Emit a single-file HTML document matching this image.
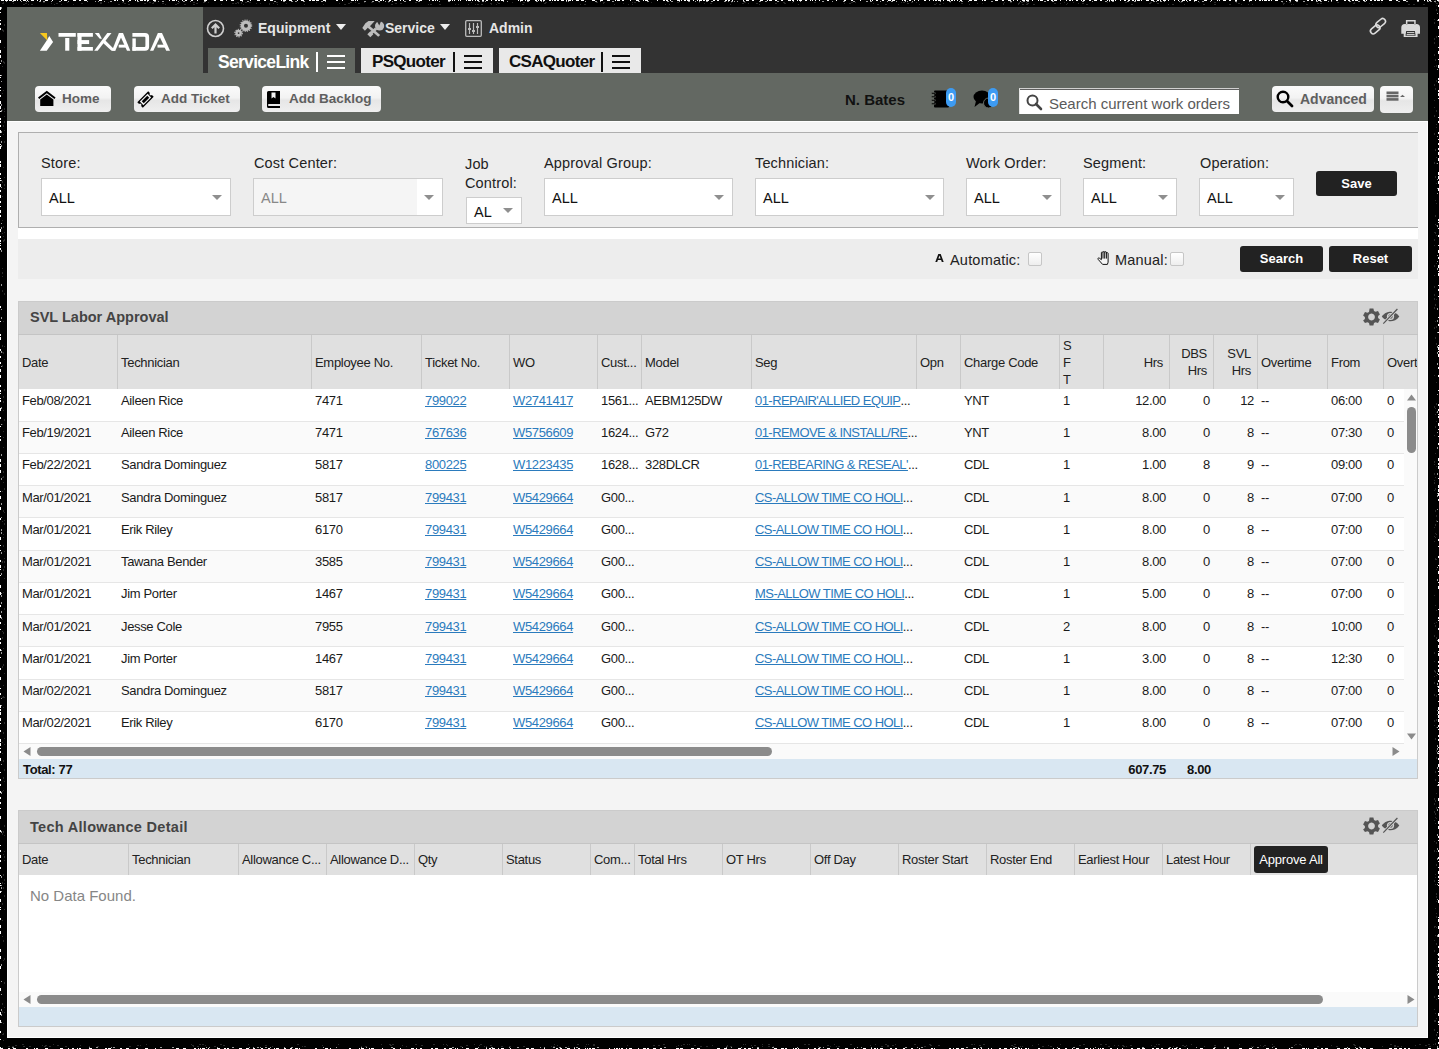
<!DOCTYPE html>
<html><head><meta charset="utf-8"><style>
*{box-sizing:border-box;margin:0;padding:0}
html,body{width:1439px;height:1049px;overflow:hidden;background:#000;font-family:"Liberation Sans",sans-serif;}
.a{position:absolute}
#app{position:absolute;left:7px;top:7px;width:1421px;height:1031px;background:#f4f4f4;overflow:hidden}
.t{position:absolute;white-space:nowrap;line-height:1}
.nav{color:#e6e6e6;font-weight:bold;font-size:14px}
.tab{position:absolute;top:48px;height:25px;background:#e9e9e9}
.tab .lbl{position:absolute;top:4px;font-weight:bold;font-size:17.5px;color:#111;letter-spacing:-0.7px}
.tab .sep{position:absolute;top:4px;width:2px;height:20px;background:#111}
.tab .ham{position:absolute;top:7px;width:18px;height:14px;border-top:2px solid #111;border-bottom:2px solid #111}
.tab .ham:after{content:"";position:absolute;left:0;right:0;top:4px;height:2px;background:#111}
.tab.act{background:#636862}
.tab.act .lbl{color:#fff}
.tab.act .sep,.tab.act .ham:after{background:#fff}
.tab.act .ham{border-color:#fff}
.btn{position:absolute;top:86px;height:26px;border-radius:4px;background:linear-gradient(#fafafa 0%,#f3f3f3 45%,#e6e6e6 55%,#efefef 100%);}
.btn .bt{position:absolute;top:5px;font-weight:bold;font-size:13.5px;color:#5f5f5f}

.lab{position:absolute;font-size:14.5px;color:#222;white-space:nowrap;line-height:19px;letter-spacing:0.15px}
.sel{position:absolute;top:178px;height:38px;background:#fff;border:1px solid #cdcdcd}
.sel .v{position:absolute;left:7px;top:12px;font-size:14.5px;color:#111;line-height:1}
.sel .ar{position:absolute;right:8px;top:16px;width:0;height:0;border-left:5px solid transparent;border-right:5px solid transparent;border-top:5px solid #8f8f8f}
.dbtn{position:absolute;background:#222;border-radius:3px;color:#fff;font-weight:bold;font-size:13px;text-align:center}
.cb{position:absolute;width:14px;height:14px;border:1px solid #c6c6c6;border-radius:2px;background:linear-gradient(#fff,#eee)}

.ph{position:absolute;background:#d3d3d3}
.ph .tt{position:absolute;left:12px;font-weight:bold;font-size:14.5px;color:#444;line-height:1}
.hc{position:absolute;font-size:13px;color:#222;line-height:17px;white-space:nowrap;letter-spacing:-0.3px}
.vb{position:absolute;width:1px;background:#c9c9c9}
.dc{position:absolute;font-size:13px;color:#1a1a1a;line-height:1;white-space:nowrap;letter-spacing:-0.35px}
.dc a{color:#2b7bbd;text-decoration:underline}
.rs{position:absolute;height:1px;background:#e6e6e6}
</style></head>
<body>
<div id="app"></div>
<div class="a" style="left:7px;top:121px;width:1421px;height:917px;background:#f4f4f4;border:1px solid #fff"></div>

<div class="a" style="left:7px;top:7px;width:196px;height:66px;background:#636862"></div>
<div class="a" style="left:203px;top:7px;width:1225px;height:66px;background:#333"></div>
<div class="a" style="left:7px;top:73px;width:1421px;height:48px;background:#636862"></div>
<!-- logo -->
<svg class="a" style="left:39px;top:32px" width="134" height="20" viewBox="0 0 134 20"><g fill="#fff">
<polygon points="10.3,4.1 14.06,9.9 7.7,18.8 0.86,18.8 7.4,9.06"/>
<rect x="19.5" y="1" width="17.3" height="3.75"/><rect x="26.2" y="6" width="4.1" height="12.7"/>
<rect x="38.5" y="1" width="4.1" height="17.7"/><rect x="38.5" y="1" width="15.4" height="3.75"/><rect x="38.5" y="8.1" width="11.65" height="3.95"/><rect x="38.5" y="15" width="15.4" height="3.7"/>
<polygon points="55.2,18.7 58.7,18.7 72.5,1 68.3,1"/><polygon points="55.8,1 60,1 62.9,6.8 60.8,6.8"/><polygon points="63.6,10.4 65.9,7.9 76.6,18.7 72.5,18.7"/>
<polygon points="73,18.7 76.3,18.7 84,1 79.9,1"/><polygon points="79.9,1 84,1 91.3,18.7 88,18.7"/><rect x="79.7" y="12.7" width="9.1" height="2.9"/>
<path d="M93.4,1 H106 Q110.1,1 110.1,5 V14.7 Q110.1,18.7 106,18.7 H93.4 V15 H105.5 Q106.4,15 106.4,14 V5.7 Q106.4,4.75 105.5,4.75 H93.4 Z"/><rect x="93.4" y="6.4" width="3.4" height="12.3"/>
<polygon points="111,18.7 114.3,18.7 123,1 118.9,1"/><polygon points="118.9,1 123,1 131,18.7 127.2,18.7"/><rect x="118.5" y="12.7" width="9.1" height="2.9"/>
</g><polygon points="0.86,1 7.95,1 8.3,8.4" fill="#f8c81d"/></svg>
<!-- nav -->
<svg class="a" style="left:206px;top:19px" width="19" height="19" viewBox="0 0 19 19"><circle cx="9.5" cy="9.5" r="8" fill="none" stroke="#cfcfcf" stroke-width="1.6"/><path d="M9.5 14.5V6M5.8 9.3L9.5 5.5 13.2 9.3" fill="none" stroke="#cfcfcf" stroke-width="2.2"/></svg>
<svg class="a" style="left:234px;top:19px" width="19" height="19" viewBox="0 0 19 19"><g fill="#bdbdbd"><circle cx="11.95" cy="6.7" r="5.2"/><circle cx="4.6" cy="14.1" r="3.3"/></g><g fill="none" stroke="#bdbdbd"><circle cx="11.95" cy="6.7" r="5.6" stroke-width="1.3" stroke-dasharray="1.1 1.1"/><circle cx="4.6" cy="14.1" r="3.7" stroke-width="1.2" stroke-dasharray="1.15 1.15"/></g><circle cx="11.95" cy="6.7" r="2" fill="#333"/><circle cx="4.6" cy="14.1" r="0.9" fill="#333"/></svg>
<div class="t nav" style="left:258px;top:21px">Equipment</div>
<svg class="a" style="left:336px;top:24px" width="10" height="7"><polygon points="0,0 10,0 5,6" fill="#eee"/></svg>
<svg class="a" style="left:362px;top:19px" width="23" height="19" viewBox="0 0 23 19"><g fill="#bdbdbd"><path d="M0.3 8.9 L3.4 4.3 L6.5 2 L12.7 2 L8.4 6.7 L6 8.6 L2.9 11.7z"/><path d="M5.5 8.5 L7.5 6.8 L18.2 16 L16.2 17.8z"/><circle cx="17.6" cy="7" r="4.6"/><path d="M13 8.5 L15.2 10.6 L9.8 15.6 L7.7 13.5z"/><path d="M8.3 12.2 L11.3 15.2 L8.3 18.2 L5.3 15.2z"/></g><path d="M14.2 1 L19.5 1 L17.3 6.5z" fill="#333"/></svg>
<div class="t nav" style="left:385px;top:21px">Service</div>
<svg class="a" style="left:440px;top:24px" width="10" height="7"><polygon points="0,0 10,0 5,6" fill="#eee"/></svg>
<svg class="a" style="left:465px;top:20px" width="17" height="17" viewBox="0 0 17 17"><rect x="0.7" y="0.7" width="15.6" height="15.6" rx="1" fill="none" stroke="#bbb" stroke-width="1.3"/><g stroke="#bbb" stroke-width="1.2"><path d="M4.5 3v11M8.5 3v11M12.5 3v11"/></g><g fill="#bbb"><rect x="3" y="8" width="3" height="2"/><rect x="7" y="10" width="3" height="2"/><rect x="11" y="6" width="3" height="2"/></g></svg>
<div class="t nav" style="left:489px;top:21px">Admin</div>
<!-- right header icons -->
<svg class="a" style="left:1368px;top:17px" width="20" height="20" viewBox="0 0 20 20"><g fill="none" stroke="#dcdcdc" stroke-width="1.6"><rect x="7.4" y="3.2" width="10.6" height="5.6" rx="2.8" transform="rotate(-40 12.7 6)"/><rect x="1.9" y="9.6" width="10.6" height="5.6" rx="2.8" transform="rotate(-40 7.2 12.4)"/></g></svg>
<svg class="a" style="left:1401px;top:20px" width="20" height="18" viewBox="0 0 20 18"><path fill-rule="evenodd" fill="#d9d9d9" d="M4.9 0H14.7V4.2H13.2V1.4H6.4V4.2H4.9Z M3.8 3.9H15.4Q19 3.9 19 7.5V13.7H16.6V17H2.7V13.7H0.3V7.5Q0.3 3.9 3.8 3.9Z M5.2 11H13.9L14.6 15.8H4.5Z"/><rect x="6" y="12.1" width="7.3" height="1" fill="#d9d9d9"/><rect x="5.6" y="14.1" width="8" height="1" fill="#d9d9d9"/></svg>
<!-- tabs -->
<div class="tab act" style="left:208px;width:147px"><div class="lbl" style="left:10px">ServiceLink</div><div class="sep" style="left:108px"></div><div class="ham" style="left:119px"></div></div>
<div class="tab" style="left:361px;width:132px"><div class="lbl" style="left:11px;font-size:17px">PSQuoter</div><div class="sep" style="left:92px"></div><div class="ham" style="left:103px"></div></div>
<div class="tab" style="left:499px;width:142px"><div class="lbl" style="left:10px;font-size:17px">CSAQuoter</div><div class="sep" style="left:102px"></div><div class="ham" style="left:113px"></div></div>
<!-- toolbar buttons -->
<div class="btn" style="left:35px;width:76px"><svg class="a" style="left:3px;top:4px" width="18" height="17" viewBox="0 0 18 17"><path d="M8.8 0.8 L17.6 7.6 L16.4 9 L8.8 3.2 L1.2 9 L0 7.6 Z" fill="#000"/><path d="M2.2 9.5 L8.8 4.6 L15.4 9.5 V16 H2.2 Z" fill="#000"/></svg><div class="bt" style="left:27px">Home</div></div>
<div class="btn" style="left:134px;width:106px"><svg class="a" style="left:3px;top:5px" width="17" height="17" viewBox="0 0 17 17"><g transform="rotate(-45 8.5 8.5)"><path d="M0.8 4.6H16.2V7.1A1.4 1.4 0 0 0 16.2 9.9V12.4H0.8V9.9A1.4 1.4 0 0 0 0.8 7.1z" fill="#000"/><rect x="3" y="6" width="11" height="5" fill="#f2f2f2"/><rect x="4.6" y="7.1" width="7.8" height="2.8" fill="#000"/></g></svg><div class="bt" style="left:27px">Add Ticket</div></div>
<div class="btn" style="left:262px;width:119px"><svg class="a" style="left:5px;top:5px" width="14" height="17" viewBox="0 0 14 17"><path d="M0 1.5A1.5 1.5 0 0 1 1.5 0H13v13H2a1 1 0 0 0 0 2h11v2H1.5A1.5 1.5 0 0 1 0 15.5z" fill="#000"/><path d="M4.5 1.5h4v6l-2-1.6-2 1.6z" fill="#f3f3f3"/></svg><div class="bt" style="left:27px">Add Backlog</div></div>
<div class="t" style="left:845px;top:92px;font-weight:bold;font-size:15px;color:#111">N. Bates</div>
<svg class="a" style="left:931px;top:90px" width="19" height="18" viewBox="0 0 19 18"><rect x="3" y="0.5" width="15" height="17" rx="1" fill="#000"/><g fill="#000" stroke="#636862" stroke-width="0.6"><rect x="0.5" y="2.5" width="4" height="1.6" rx="0.8"/><rect x="0.5" y="6" width="4" height="1.6" rx="0.8"/><rect x="0.5" y="9.5" width="4" height="1.6" rx="0.8"/><rect x="0.5" y="13" width="4" height="1.6" rx="0.8"/></g></svg>
<div class="a" style="left:946px;top:88px;width:10px;height:19px;border-radius:5px;background:#3d9bf2;color:#fff;font-size:11px;font-weight:bold;text-align:center;line-height:19px">0</div>
<svg class="a" style="left:973px;top:90px" width="22" height="19" viewBox="0 0 22 19"><ellipse cx="9" cy="7" rx="8.5" ry="6.5" fill="#000"/><path d="M3 11 L1.5 17 L8 12z" fill="#000"/><circle cx="15.5" cy="13" r="5" fill="#000" stroke="#636862" stroke-width="1"/></svg>
<div class="a" style="left:988px;top:88px;width:10px;height:19px;border-radius:5px;background:#3d9bf2;color:#fff;font-size:11px;font-weight:bold;text-align:center;line-height:19px">0</div>
<div class="a" style="left:1019px;top:88px;width:220px;height:26px;background:#fff;border-top:1px solid #d0d0d0;border-left:1px solid #e6e6e6;box-shadow:inset 0 1px 0 #606060"></div>
<svg class="a" style="left:1026px;top:94px" width="17" height="17" viewBox="0 0 17 17"><circle cx="6.5" cy="6.5" r="5" fill="none" stroke="#444" stroke-width="2"/><path d="M10 10 L15 15" stroke="#444" stroke-width="2.6" stroke-linecap="round"/></svg>
<div class="t" style="left:1049px;top:96px;font-size:15px;color:#5a5a5a">Search current work orders</div>
<div class="btn" style="left:1272px;width:102px"><svg class="a" style="left:4px;top:4px" width="18" height="18" viewBox="0 0 18 18"><circle cx="7" cy="7" r="5.3" fill="none" stroke="#000" stroke-width="2.4"/><path d="M11 11 L16 16" stroke="#000" stroke-width="2.8" stroke-linecap="round"/></svg><div class="bt" style="left:28px;font-size:14px">Advanced</div></div>
<div class="btn" style="left:1380px;width:33px;height:27px"><svg class="a" style="left:6px;top:5px" width="20" height="11" viewBox="0 0 20 11"><rect x="0.5" y="0.5" width="12" height="2.6" fill="#666"/><rect x="0.5" y="3.8" width="12" height="2.6" fill="#666"/><rect x="0.5" y="7.1" width="12" height="2.6" fill="#666"/><polygon points="14,6 19,6 16.5,3.8" fill="#666"/></svg></div>


<div class="a" style="left:18px;top:132px;width:1400px;height:96px;background:#ededed;border:1px solid #afafaf;border-right:none"></div>
<div class="lab" style="left:41px;top:154px">Store:</div>
<div class="sel" style="left:41px;width:190px"><div class="v">ALL</div><div class="ar"></div></div>
<div class="lab" style="left:254px;top:154px">Cost Center:</div>
<div class="sel" style="left:253px;width:190px;background:#f5f5f5"><div class="a" style="right:0;top:0;width:25px;height:36px;background:#fff"></div><div class="v" style="color:#888">ALL</div><div class="ar"></div></div>
<div class="lab" style="left:465px;top:155px">Job<br>Control:</div>
<div class="sel" style="left:466px;top:197px;width:56px;height:27px"><div class="v" style="top:7px">AL</div><div class="ar" style="top:10px;right:8px"></div></div>
<div class="lab" style="left:544px;top:154px">Approval Group:</div>
<div class="sel" style="left:544px;width:189px"><div class="v">ALL</div><div class="ar"></div></div>
<div class="lab" style="left:755px;top:154px">Technician:</div>
<div class="sel" style="left:755px;width:189px"><div class="v">ALL</div><div class="ar"></div></div>
<div class="lab" style="left:966px;top:154px">Work Order:</div>
<div class="sel" style="left:966px;width:95px"><div class="v">ALL</div><div class="ar"></div></div>
<div class="lab" style="left:1083px;top:154px">Segment:</div>
<div class="sel" style="left:1083px;width:94px"><div class="v">ALL</div><div class="ar"></div></div>
<div class="lab" style="left:1200px;top:154px">Operation:</div>
<div class="sel" style="left:1199px;width:95px"><div class="v">ALL</div><div class="ar"></div></div>
<div class="dbtn" style="left:1316px;top:171px;width:81px;height:25px;line-height:25px">Save</div>
<div class="a" style="left:18px;top:228px;width:1400px;height:11px;background:#fff"></div>
<div class="a" style="left:18px;top:239px;width:1400px;height:40px;background:#ededed"></div>
<svg class="a" style="left:935px;top:254px" width="9" height="8" viewBox="0 0 9 8"><path d="M0.3 8 L3.3 0 H5.7 L8.7 8 H6.8 L6.1 6 H2.9 L2.2 8z M3.4 4.5 H5.6 L4.5 1.5z" fill="#111" fill-rule="evenodd"/></svg>
<div class="t" style="left:950px;top:253px;font-size:14.5px;color:#222;letter-spacing:0.2px">Automatic:</div>
<div class="cb" style="left:1028px;top:252px"></div>
<svg class="a" style="left:1097px;top:250px" width="14" height="16" viewBox="0 0 14 16"><path d="M4.4 9.2V2.6C4.4 1.7 6 1.7 6 2.6V2.1C6 1.3 7.7 1.3 7.7 2.1V2.3C7.7 1.5 9.4 1.5 9.4 2.3V3.3C9.4 2.5 11.1 2.5 11.1 3.3V12.2L10.4 14.4H5.6L1.1 9.3C0.5 8.5 1.4 7.5 2.3 8.1L4.4 9.7z M6 2.6V8.6 M7.7 2.1V8.6 M9.4 2.3V8.6" fill="#f6f6f6" stroke="#111" stroke-width="1" stroke-linejoin="round"/></svg>
<div class="t" style="left:1115px;top:253px;font-size:14.5px;color:#222;letter-spacing:0.2px">Manual:</div>
<div class="cb" style="left:1170px;top:252px"></div>
<div class="dbtn" style="left:1240px;top:246px;width:83px;height:26px;line-height:26px">Search</div>
<div class="dbtn" style="left:1329px;top:246px;width:83px;height:26px;line-height:26px">Reset</div>

<div class="a" style="left:18px;top:301px;width:1400px;height:478px;background:#fafafa;border:1px solid #cbcbcb"></div>
<div class="ph" style="left:19px;top:302px;width:1398px;height:32px"><div class="tt" style="top:7.5px;left:11px">SVL Labor Approval</div></div>
<svg class="a" style="left:1363px;top:308px" width="37" height="18" viewBox="0 0 37 18">
<path fill="#555" fill-rule="evenodd" d="M6.6 0.5h3.8l0.6 2.4 1.6 0.9 2.4-0.7 1.9 3.3-1.8 1.7v1.8l1.8 1.7-1.9 3.3-2.4-0.7-1.6 0.9-0.6 2.4H6.6l-0.6-2.4-1.6-0.9-2.4 0.7L0.1 12.6 1.9 10.9V9.1L0.1 7.4 2 4.1l2.4 0.7 1.6-0.9z M8.5 5.6a3.4 3.4 0 1 0 0.01 0z"/>
<path fill="#555" d="M18.8 8.5 C21.5 4.8 25 3.8 27.5 3.8 C30.5 3.8 34 5 36.3 8.5 C34 12 30.5 13.2 27.5 13.2 C25 13.2 21.5 12.2 18.8 8.5z"/>
<circle cx="27.5" cy="8.5" r="3.6" fill="#d3d3d3"/><circle cx="27.5" cy="8.5" r="2.2" fill="#555"/>
<path d="M20.3 15.7 L34.4 1" stroke="#d3d3d3" stroke-width="3"/><path d="M20.3 15.7 L34.4 1" stroke="#555" stroke-width="1.2"/>
</svg>
<div class="a" style="left:18px;top:334px;width:1400px;height:1px;background:#c4c4c4"></div>
<div class="a" style="left:19px;top:335px;width:1398px;height:54px;background:#e0e0e0"></div>
<div class="a" style="left:0;top:0;width:1417px;height:1049px;overflow:hidden">
<div class="vb" style="left:117px;top:335px;height:54px"></div>
<div class="vb" style="left:311px;top:335px;height:54px"></div>
<div class="vb" style="left:421px;top:335px;height:54px"></div>
<div class="vb" style="left:509px;top:335px;height:54px"></div>
<div class="vb" style="left:597px;top:335px;height:54px"></div>
<div class="vb" style="left:641px;top:335px;height:54px"></div>
<div class="vb" style="left:751px;top:335px;height:54px"></div>
<div class="vb" style="left:916px;top:335px;height:54px"></div>
<div class="vb" style="left:960px;top:335px;height:54px"></div>
<div class="vb" style="left:1059px;top:335px;height:54px"></div>
<div class="vb" style="left:1103px;top:335px;height:54px"></div>
<div class="vb" style="left:1169px;top:335px;height:54px"></div>
<div class="vb" style="left:1213px;top:335px;height:54px"></div>
<div class="vb" style="left:1257px;top:335px;height:54px"></div>
<div class="vb" style="left:1327px;top:335px;height:54px"></div>
<div class="vb" style="left:1383px;top:335px;height:54px"></div>
<div class="hc" style="left:22px;top:354px">Date</div>
<div class="hc" style="left:121px;top:354px">Technician</div>
<div class="hc" style="left:315px;top:354px">Employee No.</div>
<div class="hc" style="left:425px;top:354px">Ticket No.</div>
<div class="hc" style="left:513px;top:354px">WO</div>
<div class="hc" style="left:601px;top:354px">Cust...</div>
<div class="hc" style="left:645px;top:354px">Model</div>
<div class="hc" style="left:755px;top:354px">Seg</div>
<div class="hc" style="left:920px;top:354px">Opn</div>
<div class="hc" style="left:964px;top:354px">Charge Code</div>
<div class="hc" style="left:1063px;top:337px;width:12px">S<br>F<br>T</div>
<div class="hc" style="left:1103px;top:354px;width:60px;text-align:right">Hrs</div>
<div class="hc" style="left:1169px;top:345px;width:38px;text-align:right">DBS<br>Hrs</div>
<div class="hc" style="left:1213px;top:345px;width:38px;text-align:right">SVL<br>Hrs</div>
<div class="hc" style="left:1261px;top:354px">Overtime</div>
<div class="hc" style="left:1331px;top:354px">From</div>
<div class="hc" style="left:1387px;top:354px">Overtime</div>
</div>
<div class="a" style="left:19px;top:389px;width:1385px;height:355px;overflow:hidden">
<div class="a" style="left:0;top:0px;width:1385px;height:32px;background:#fff"></div>
<div class="dc" style="left:3px;top:5px">Feb/08/2021</div>
<div class="dc" style="left:102px;top:5px">Aileen Rice</div>
<div class="dc" style="left:296px;top:5px">7471</div>
<div class="dc" style="left:406px;top:5px"><a>799022</a></div>
<div class="dc" style="left:494px;top:5px"><a>W2741417</a></div>
<div class="dc" style="left:582px;top:5px">1561...</div>
<div class="dc" style="left:626px;top:5px">AEBM125DW</div>
<div class="dc" style="left:736px;top:5px"><a style="letter-spacing:-0.55px">01-REPAIR'ALLIED EQUIP</a>...</div>
<div class="dc" style="left:945px;top:5px">YNT</div>
<div class="dc" style="left:1044px;top:5px">1</div>
<div class="dc" style="left:1084px;top:5px;width:63px;text-align:right">12.00</div>
<div class="dc" style="left:1150px;top:5px;width:41px;text-align:right">0</div>
<div class="dc" style="left:1194px;top:5px;width:41px;text-align:right">12</div>
<div class="dc" style="left:1242px;top:5px">--</div>
<div class="dc" style="left:1312px;top:5px">06:00</div>
<div class="dc" style="left:1368px;top:5px">0</div>
<div class="a" style="left:0;top:32px;width:1385px;height:32px;background:#fafafa"></div>
<div class="dc" style="left:3px;top:37px">Feb/19/2021</div>
<div class="dc" style="left:102px;top:37px">Aileen Rice</div>
<div class="dc" style="left:296px;top:37px">7471</div>
<div class="dc" style="left:406px;top:37px"><a>767636</a></div>
<div class="dc" style="left:494px;top:37px"><a>W5756609</a></div>
<div class="dc" style="left:582px;top:37px">1624...</div>
<div class="dc" style="left:626px;top:37px">G72</div>
<div class="dc" style="left:736px;top:37px"><a style="letter-spacing:-0.55px">01-REMOVE &amp; INSTALL/RE</a>...</div>
<div class="dc" style="left:945px;top:37px">YNT</div>
<div class="dc" style="left:1044px;top:37px">1</div>
<div class="dc" style="left:1084px;top:37px;width:63px;text-align:right">8.00</div>
<div class="dc" style="left:1150px;top:37px;width:41px;text-align:right">0</div>
<div class="dc" style="left:1194px;top:37px;width:41px;text-align:right">8</div>
<div class="dc" style="left:1242px;top:37px">--</div>
<div class="dc" style="left:1312px;top:37px">07:30</div>
<div class="dc" style="left:1368px;top:37px">0</div>
<div class="a" style="left:0;top:64px;width:1385px;height:32px;background:#fff"></div>
<div class="dc" style="left:3px;top:69px">Feb/22/2021</div>
<div class="dc" style="left:102px;top:69px">Sandra Dominguez</div>
<div class="dc" style="left:296px;top:69px">5817</div>
<div class="dc" style="left:406px;top:69px"><a>800225</a></div>
<div class="dc" style="left:494px;top:69px"><a>W1223435</a></div>
<div class="dc" style="left:582px;top:69px">1628...</div>
<div class="dc" style="left:626px;top:69px">328DLCR</div>
<div class="dc" style="left:736px;top:69px"><a style="letter-spacing:-0.55px">01-REBEARING &amp; RESEAL'</a>...</div>
<div class="dc" style="left:945px;top:69px">CDL</div>
<div class="dc" style="left:1044px;top:69px">1</div>
<div class="dc" style="left:1084px;top:69px;width:63px;text-align:right">1.00</div>
<div class="dc" style="left:1150px;top:69px;width:41px;text-align:right">8</div>
<div class="dc" style="left:1194px;top:69px;width:41px;text-align:right">9</div>
<div class="dc" style="left:1242px;top:69px">--</div>
<div class="dc" style="left:1312px;top:69px">09:00</div>
<div class="dc" style="left:1368px;top:69px">0</div>
<div class="a" style="left:0;top:96px;width:1385px;height:32px;background:#fafafa"></div>
<div class="dc" style="left:3px;top:102px">Mar/01/2021</div>
<div class="dc" style="left:102px;top:102px">Sandra Dominguez</div>
<div class="dc" style="left:296px;top:102px">5817</div>
<div class="dc" style="left:406px;top:102px"><a>799431</a></div>
<div class="dc" style="left:494px;top:102px"><a>W5429664</a></div>
<div class="dc" style="left:582px;top:102px">G00...</div>
<div class="dc" style="left:736px;top:102px"><a style="letter-spacing:-0.55px">CS-ALLOW TIME CO HOLI</a>...</div>
<div class="dc" style="left:945px;top:102px">CDL</div>
<div class="dc" style="left:1044px;top:102px">1</div>
<div class="dc" style="left:1084px;top:102px;width:63px;text-align:right">8.00</div>
<div class="dc" style="left:1150px;top:102px;width:41px;text-align:right">0</div>
<div class="dc" style="left:1194px;top:102px;width:41px;text-align:right">8</div>
<div class="dc" style="left:1242px;top:102px">--</div>
<div class="dc" style="left:1312px;top:102px">07:00</div>
<div class="dc" style="left:1368px;top:102px">0</div>
<div class="a" style="left:0;top:128px;width:1385px;height:33px;background:#fff"></div>
<div class="dc" style="left:3px;top:134px">Mar/01/2021</div>
<div class="dc" style="left:102px;top:134px">Erik Riley</div>
<div class="dc" style="left:296px;top:134px">6170</div>
<div class="dc" style="left:406px;top:134px"><a>799431</a></div>
<div class="dc" style="left:494px;top:134px"><a>W5429664</a></div>
<div class="dc" style="left:582px;top:134px">G00...</div>
<div class="dc" style="left:736px;top:134px"><a style="letter-spacing:-0.55px">CS-ALLOW TIME CO HOLI</a>...</div>
<div class="dc" style="left:945px;top:134px">CDL</div>
<div class="dc" style="left:1044px;top:134px">1</div>
<div class="dc" style="left:1084px;top:134px;width:63px;text-align:right">8.00</div>
<div class="dc" style="left:1150px;top:134px;width:41px;text-align:right">0</div>
<div class="dc" style="left:1194px;top:134px;width:41px;text-align:right">8</div>
<div class="dc" style="left:1242px;top:134px">--</div>
<div class="dc" style="left:1312px;top:134px">07:00</div>
<div class="dc" style="left:1368px;top:134px">0</div>
<div class="a" style="left:0;top:161px;width:1385px;height:32px;background:#fafafa"></div>
<div class="dc" style="left:3px;top:166px">Mar/01/2021</div>
<div class="dc" style="left:102px;top:166px">Tawana Bender</div>
<div class="dc" style="left:296px;top:166px">3585</div>
<div class="dc" style="left:406px;top:166px"><a>799431</a></div>
<div class="dc" style="left:494px;top:166px"><a>W5429664</a></div>
<div class="dc" style="left:582px;top:166px">G00...</div>
<div class="dc" style="left:736px;top:166px"><a style="letter-spacing:-0.55px">CS-ALLOW TIME CO HOLI</a>...</div>
<div class="dc" style="left:945px;top:166px">CDL</div>
<div class="dc" style="left:1044px;top:166px">1</div>
<div class="dc" style="left:1084px;top:166px;width:63px;text-align:right">8.00</div>
<div class="dc" style="left:1150px;top:166px;width:41px;text-align:right">0</div>
<div class="dc" style="left:1194px;top:166px;width:41px;text-align:right">8</div>
<div class="dc" style="left:1242px;top:166px">--</div>
<div class="dc" style="left:1312px;top:166px">07:00</div>
<div class="dc" style="left:1368px;top:166px">0</div>
<div class="a" style="left:0;top:193px;width:1385px;height:32px;background:#fff"></div>
<div class="dc" style="left:3px;top:198px">Mar/01/2021</div>
<div class="dc" style="left:102px;top:198px">Jim Porter</div>
<div class="dc" style="left:296px;top:198px">1467</div>
<div class="dc" style="left:406px;top:198px"><a>799431</a></div>
<div class="dc" style="left:494px;top:198px"><a>W5429664</a></div>
<div class="dc" style="left:582px;top:198px">G00...</div>
<div class="dc" style="left:736px;top:198px"><a style="letter-spacing:-0.55px">MS-ALLOW TIME CO HOLI</a>...</div>
<div class="dc" style="left:945px;top:198px">CDL</div>
<div class="dc" style="left:1044px;top:198px">1</div>
<div class="dc" style="left:1084px;top:198px;width:63px;text-align:right">5.00</div>
<div class="dc" style="left:1150px;top:198px;width:41px;text-align:right">0</div>
<div class="dc" style="left:1194px;top:198px;width:41px;text-align:right">8</div>
<div class="dc" style="left:1242px;top:198px">--</div>
<div class="dc" style="left:1312px;top:198px">07:00</div>
<div class="dc" style="left:1368px;top:198px">0</div>
<div class="a" style="left:0;top:225px;width:1385px;height:32px;background:#fafafa"></div>
<div class="dc" style="left:3px;top:231px">Mar/01/2021</div>
<div class="dc" style="left:102px;top:231px">Jesse Cole</div>
<div class="dc" style="left:296px;top:231px">7955</div>
<div class="dc" style="left:406px;top:231px"><a>799431</a></div>
<div class="dc" style="left:494px;top:231px"><a>W5429664</a></div>
<div class="dc" style="left:582px;top:231px">G00...</div>
<div class="dc" style="left:736px;top:231px"><a style="letter-spacing:-0.55px">CS-ALLOW TIME CO HOLI</a>...</div>
<div class="dc" style="left:945px;top:231px">CDL</div>
<div class="dc" style="left:1044px;top:231px">2</div>
<div class="dc" style="left:1084px;top:231px;width:63px;text-align:right">8.00</div>
<div class="dc" style="left:1150px;top:231px;width:41px;text-align:right">0</div>
<div class="dc" style="left:1194px;top:231px;width:41px;text-align:right">8</div>
<div class="dc" style="left:1242px;top:231px">--</div>
<div class="dc" style="left:1312px;top:231px">10:00</div>
<div class="dc" style="left:1368px;top:231px">0</div>
<div class="a" style="left:0;top:257px;width:1385px;height:33px;background:#fff"></div>
<div class="dc" style="left:3px;top:263px">Mar/01/2021</div>
<div class="dc" style="left:102px;top:263px">Jim Porter</div>
<div class="dc" style="left:296px;top:263px">1467</div>
<div class="dc" style="left:406px;top:263px"><a>799431</a></div>
<div class="dc" style="left:494px;top:263px"><a>W5429664</a></div>
<div class="dc" style="left:582px;top:263px">G00...</div>
<div class="dc" style="left:736px;top:263px"><a style="letter-spacing:-0.55px">CS-ALLOW TIME CO HOLI</a>...</div>
<div class="dc" style="left:945px;top:263px">CDL</div>
<div class="dc" style="left:1044px;top:263px">1</div>
<div class="dc" style="left:1084px;top:263px;width:63px;text-align:right">3.00</div>
<div class="dc" style="left:1150px;top:263px;width:41px;text-align:right">0</div>
<div class="dc" style="left:1194px;top:263px;width:41px;text-align:right">8</div>
<div class="dc" style="left:1242px;top:263px">--</div>
<div class="dc" style="left:1312px;top:263px">12:30</div>
<div class="dc" style="left:1368px;top:263px">0</div>
<div class="a" style="left:0;top:290px;width:1385px;height:32px;background:#fafafa"></div>
<div class="dc" style="left:3px;top:295px">Mar/02/2021</div>
<div class="dc" style="left:102px;top:295px">Sandra Dominguez</div>
<div class="dc" style="left:296px;top:295px">5817</div>
<div class="dc" style="left:406px;top:295px"><a>799431</a></div>
<div class="dc" style="left:494px;top:295px"><a>W5429664</a></div>
<div class="dc" style="left:582px;top:295px">G00...</div>
<div class="dc" style="left:736px;top:295px"><a style="letter-spacing:-0.55px">CS-ALLOW TIME CO HOLI</a>...</div>
<div class="dc" style="left:945px;top:295px">CDL</div>
<div class="dc" style="left:1044px;top:295px">1</div>
<div class="dc" style="left:1084px;top:295px;width:63px;text-align:right">8.00</div>
<div class="dc" style="left:1150px;top:295px;width:41px;text-align:right">0</div>
<div class="dc" style="left:1194px;top:295px;width:41px;text-align:right">8</div>
<div class="dc" style="left:1242px;top:295px">--</div>
<div class="dc" style="left:1312px;top:295px">07:00</div>
<div class="dc" style="left:1368px;top:295px">0</div>
<div class="a" style="left:0;top:322px;width:1385px;height:32px;background:#fff"></div>
<div class="dc" style="left:3px;top:327px">Mar/02/2021</div>
<div class="dc" style="left:102px;top:327px">Erik Riley</div>
<div class="dc" style="left:296px;top:327px">6170</div>
<div class="dc" style="left:406px;top:327px"><a>799431</a></div>
<div class="dc" style="left:494px;top:327px"><a>W5429664</a></div>
<div class="dc" style="left:582px;top:327px">G00...</div>
<div class="dc" style="left:736px;top:327px"><a style="letter-spacing:-0.55px">CS-ALLOW TIME CO HOLI</a>...</div>
<div class="dc" style="left:945px;top:327px">CDL</div>
<div class="dc" style="left:1044px;top:327px">1</div>
<div class="dc" style="left:1084px;top:327px;width:63px;text-align:right">8.00</div>
<div class="dc" style="left:1150px;top:327px;width:41px;text-align:right">0</div>
<div class="dc" style="left:1194px;top:327px;width:41px;text-align:right">8</div>
<div class="dc" style="left:1242px;top:327px">--</div>
<div class="dc" style="left:1312px;top:327px">07:00</div>
<div class="dc" style="left:1368px;top:327px">0</div>
<div class="rs" style="left:0;top:32px;width:1385px"></div>
<div class="rs" style="left:0;top:64px;width:1385px"></div>
<div class="rs" style="left:0;top:96px;width:1385px"></div>
<div class="rs" style="left:0;top:128px;width:1385px"></div>
<div class="rs" style="left:0;top:161px;width:1385px"></div>
<div class="rs" style="left:0;top:193px;width:1385px"></div>
<div class="rs" style="left:0;top:225px;width:1385px"></div>
<div class="rs" style="left:0;top:257px;width:1385px"></div>
<div class="rs" style="left:0;top:290px;width:1385px"></div>
<div class="rs" style="left:0;top:322px;width:1385px"></div>
<div class="rs" style="left:0;top:354px;width:1385px"></div>
</div>
<div class="a" style="left:1404px;top:389px;width:13px;height:370px;background:#fafafa"></div>
<svg class="a" style="left:1407px;top:394px" width="9" height="7"><polygon points="0,6.5 4.5,0.5 9,6.5" fill="#8b8b8b"/></svg>
<div class="a" style="left:1407px;top:407px;width:9px;height:46px;border-radius:4.5px;background:#8b8b8b"></div>
<svg class="a" style="left:1407px;top:733px" width="9" height="7"><polygon points="0,0.5 9,0.5 4.5,6.5" fill="#8b8b8b"/></svg>
<div class="a" style="left:19px;top:744px;width:1385px;height:15px;background:#fafafa"></div>
<svg class="a" style="left:23px;top:747px" width="8" height="9"><polygon points="7.5,0 7.5,9 0.5,4.5" fill="#8b8b8b"/></svg>
<div class="a" style="left:37px;top:747px;width:735px;height:9px;border-radius:4.5px;background:#8b8b8b"></div>
<svg class="a" style="left:1392px;top:747px" width="8" height="9"><polygon points="0.5,0 0.5,9 7.5,4.5" fill="#8b8b8b"/></svg>
<div class="a" style="left:19px;top:759px;width:1398px;height:19px;background:#d9e7f2"></div>
<div class="dc" style="left:23px;top:763px;font-weight:bold;color:#111">Total: 77</div>
<div class="dc" style="left:1103px;top:763px;width:63px;text-align:right;font-weight:bold;color:#111">607.75</div>
<div class="dc" style="left:1187px;top:763px;font-weight:bold;color:#111">8.00</div>
<div class="a" style="left:18px;top:810px;width:1400px;height:217px;background:#fff;border:1px solid #cbcbcb"></div>
<div class="ph" style="left:19px;top:811px;width:1398px;height:32px"><div class="tt" style="top:8.5px;left:11px;letter-spacing:0.3px">Tech Allowance Detail</div></div>
<svg class="a" style="left:1363px;top:817px" width="37" height="18" viewBox="0 0 37 18">
<path fill="#555" fill-rule="evenodd" d="M6.6 0.5h3.8l0.6 2.4 1.6 0.9 2.4-0.7 1.9 3.3-1.8 1.7v1.8l1.8 1.7-1.9 3.3-2.4-0.7-1.6 0.9-0.6 2.4H6.6l-0.6-2.4-1.6-0.9-2.4 0.7L0.1 12.6 1.9 10.9V9.1L0.1 7.4 2 4.1l2.4 0.7 1.6-0.9z M8.5 5.6a3.4 3.4 0 1 0 0.01 0z"/>
<path fill="#555" d="M18.8 8.5 C21.5 4.8 25 3.8 27.5 3.8 C30.5 3.8 34 5 36.3 8.5 C34 12 30.5 13.2 27.5 13.2 C25 13.2 21.5 12.2 18.8 8.5z"/>
<circle cx="27.5" cy="8.5" r="3.6" fill="#d3d3d3"/><circle cx="27.5" cy="8.5" r="2.2" fill="#555"/>
<path d="M20.3 15.7 L34.4 1" stroke="#d3d3d3" stroke-width="3"/><path d="M20.3 15.7 L34.4 1" stroke="#555" stroke-width="1.2"/>
</svg>
<div class="a" style="left:18px;top:843px;width:1400px;height:1px;background:#c4c4c4"></div>
<div class="a" style="left:19px;top:844px;width:1398px;height:31px;background:#e0e0e0"></div>
<div class="vb" style="left:128px;top:844px;height:31px"></div>
<div class="vb" style="left:238px;top:844px;height:31px"></div>
<div class="vb" style="left:326px;top:844px;height:31px"></div>
<div class="vb" style="left:414px;top:844px;height:31px"></div>
<div class="vb" style="left:502px;top:844px;height:31px"></div>
<div class="vb" style="left:590px;top:844px;height:31px"></div>
<div class="vb" style="left:634px;top:844px;height:31px"></div>
<div class="vb" style="left:722px;top:844px;height:31px"></div>
<div class="vb" style="left:810px;top:844px;height:31px"></div>
<div class="vb" style="left:898px;top:844px;height:31px"></div>
<div class="vb" style="left:986px;top:844px;height:31px"></div>
<div class="vb" style="left:1074px;top:844px;height:31px"></div>
<div class="vb" style="left:1162px;top:844px;height:31px"></div>
<div class="vb" style="left:1250px;top:844px;height:31px"></div>
<div class="hc" style="left:22px;top:851px">Date</div>
<div class="hc" style="left:132px;top:851px">Technician</div>
<div class="hc" style="left:242px;top:851px">Allowance C...</div>
<div class="hc" style="left:330px;top:851px">Allowance D...</div>
<div class="hc" style="left:418px;top:851px">Qty</div>
<div class="hc" style="left:506px;top:851px">Status</div>
<div class="hc" style="left:594px;top:851px">Com...</div>
<div class="hc" style="left:638px;top:851px">Total Hrs</div>
<div class="hc" style="left:726px;top:851px">OT Hrs</div>
<div class="hc" style="left:814px;top:851px">Off Day</div>
<div class="hc" style="left:902px;top:851px">Roster Start</div>
<div class="hc" style="left:990px;top:851px">Roster End</div>
<div class="hc" style="left:1078px;top:851px">Earliest Hour</div>
<div class="hc" style="left:1166px;top:851px">Latest Hour</div>
<div class="dbtn" style="left:1254px;top:846px;width:74px;height:27px;line-height:28px;font-weight:normal;font-size:13px;letter-spacing:-0.2px">Approve All</div>
<div class="t" style="left:30px;top:888px;font-size:15px;color:#868686">No Data Found.</div>
<div class="a" style="left:19px;top:992px;width:1398px;height:15px;background:#fafafa"></div>
<svg class="a" style="left:23px;top:995px" width="8" height="9"><polygon points="7.5,0 7.5,9 0.5,4.5" fill="#8b8b8b"/></svg>
<div class="a" style="left:37px;top:995px;width:286px;height:9px;border-radius:4.5px;background:#8b8b8b;width:1286px"></div>
<svg class="a" style="left:1407px;top:995px" width="8" height="9"><polygon points="0.5,0 0.5,9 7.5,4.5" fill="#8b8b8b"/></svg>
<div class="a" style="left:19px;top:1007px;width:1398px;height:19px;background:#d9e7f2"></div>
<svg class="a" style="left:0;top:0" width="1439" height="1049" shape-rendering="crispEdges"><path fill="#fff" d="M1 0h3v1h-3zM5 0h3v1h-3zM9 0h3v1h-3zM13 0h3v1h-3zM17 0h1v1h-1zM20 0h1v1h-1zM23 0h3v1h-3zM27 0h1v1h-1zM31 0h3v1h-3zM37 0h1v1h-1zM40 0h1v1h-1zM45 0h3v1h-3zM52 0h1v1h-1zM61 0h1v1h-1zM64 0h3v1h-3zM73 0h3v1h-3zM79 0h2v1h-2zM84 0h3v1h-3zM99 0h3v1h-3zM114 0h2v1h-2zM117 0h1v1h-1zM122 0h2v1h-2zM129 0h2v1h-2zM135 0h1v1h-1zM137 0h1v1h-1zM140 0h3v1h-3zM144 0h2v1h-2zM147 0h2v1h-2zM153 0h3v1h-3zM169 0h1v1h-1zM172 0h3v1h-3zM176 0h1v1h-1zM182 0h1v1h-1zM185 0h2v1h-2zM191 0h2v1h-2zM197 0h1v1h-1zM204 0h3v1h-3zM214 0h2v1h-2zM220 0h3v1h-3zM226 0h1v1h-1zM231 0h3v1h-3zM240 0h3v1h-3zM250 0h1v1h-1zM257 0h3v1h-3zM264 0h2v1h-2zM270 0h3v1h-3zM281 0h1v1h-1zM283 0h3v1h-3zM289 0h3v1h-3zM297 0h1v1h-1zM301 0h3v1h-3zM309 0h2v1h-2zM312 0h3v1h-3zM316 0h3v1h-3zM323 0h3v1h-3zM336 0h2v1h-2zM342 0h1v1h-1zM351 0h3v1h-3zM355 0h1v1h-1zM357 0h1v1h-1zM375 0h3v1h-3zM380 0h2v1h-2zM383 0h1v1h-1zM389 0h2v1h-2zM394 0h3v1h-3zM400 0h1v1h-1zM403 0h1v1h-1zM409 0h2v1h-2zM416 0h2v1h-2zM419 0h3v1h-3zM429 0h1v1h-1zM432 0h2v1h-2zM435 0h1v1h-1zM437 0h1v1h-1zM448 0h3v1h-3zM452 0h1v1h-1zM454 0h1v1h-1zM458 0h1v1h-1zM460 0h1v1h-1zM466 0h1v1h-1zM468 0h3v1h-3zM472 0h1v1h-1zM475 0h1v1h-1zM477 0h2v1h-2zM482 0h2v1h-2zM486 0h2v1h-2zM491 0h1v1h-1zM495 0h2v1h-2zM498 0h2v1h-2zM501 0h3v1h-3zM518 0h1v1h-1zM520 0h3v1h-3zM525 0h1v1h-1zM527 0h3v1h-3zM535 0h2v1h-2zM538 0h1v1h-1zM540 0h2v1h-2zM543 0h2v1h-2zM549 0h2v1h-2zM552 0h1v1h-1zM554 0h2v1h-2zM557 0h2v1h-2zM561 0h3v1h-3zM566 0h1v1h-1zM568 0h3v1h-3zM572 0h1v1h-1zM576 0h3v1h-3zM581 0h3v1h-3zM592 0h3v1h-3zM600 0h3v1h-3zM607 0h3v1h-3zM615 0h1v1h-1zM617 0h3v1h-3zM622 0h2v1h-2zM630 0h1v1h-1zM636 0h3v1h-3zM643 0h1v1h-1zM645 0h3v1h-3zM657 0h1v1h-1zM663 0h2v1h-2zM666 0h2v1h-2zM670 0h1v1h-1zM677 0h3v1h-3zM681 0h1v1h-1zM684 0h2v1h-2zM687 0h3v1h-3zM693 0h1v1h-1zM697 0h1v1h-1zM699 0h3v1h-3zM703 0h2v1h-2zM706 0h3v1h-3zM713 0h2v1h-2zM717 0h2v1h-2zM725 0h2v1h-2zM728 0h2v1h-2zM732 0h1v1h-1zM743 0h1v1h-1zM746 0h3v1h-3zM752 0h2v1h-2zM760 0h3v1h-3zM767 0h1v1h-1zM769 0h3v1h-3zM775 0h2v1h-2zM781 0h2v1h-2zM788 0h3v1h-3zM792 0h2v1h-2zM797 0h1v1h-1zM799 0h3v1h-3zM805 0h2v1h-2zM810 0h1v1h-1zM812 0h1v1h-1zM815 0h1v1h-1zM819 0h1v1h-1zM827 0h2v1h-2zM836 0h1v1h-1zM844 0h2v1h-2zM851 0h2v1h-2zM860 0h1v1h-1zM870 0h1v1h-1zM872 0h1v1h-1zM876 0h2v1h-2zM882 0h2v1h-2zM888 0h3v1h-3zM892 0h3v1h-3zM902 0h1v1h-1zM904 0h2v1h-2zM909 0h2v1h-2zM914 0h1v1h-1zM918 0h1v1h-1zM924 0h2v1h-2zM929 0h1v1h-1zM933 0h1v1h-1zM935 0h2v1h-2zM938 0h3v1h-3zM943 0h1v1h-1zM947 0h3v1h-3zM951 0h2v1h-2zM954 0h1v1h-1zM957 0h1v1h-1zM960 0h2v1h-2zM969 0h3v1h-3zM974 0h3v1h-3zM982 0h1v1h-1zM984 0h2v1h-2zM995 0h3v1h-3zM1002 0h2v1h-2zM1008 0h3v1h-3zM1013 0h1v1h-1zM1017 0h1v1h-1zM1022 0h3v1h-3zM1026 0h3v1h-3zM1032 0h1v1h-1zM1038 0h1v1h-1zM1040 0h3v1h-3zM1047 0h2v1h-2zM1051 0h2v1h-2zM1054 0h3v1h-3zM1060 0h1v1h-1zM1066 0h1v1h-1zM1069 0h2v1h-2zM1072 0h1v1h-1zM1076 0h2v1h-2zM1081 0h1v1h-1zM1083 0h2v1h-2zM1089 0h2v1h-2zM1094 0h3v1h-3zM1100 0h2v1h-2zM1107 0h1v1h-1zM1109 0h1v1h-1zM1111 0h3v1h-3zM1115 0h1v1h-1zM1120 0h1v1h-1zM1124 0h2v1h-2zM1128 0h2v1h-2zM1132 0h2v1h-2zM1135 0h1v1h-1zM1137 0h3v1h-3zM1141 0h1v1h-1zM1146 0h3v1h-3zM1151 0h3v1h-3zM1157 0h2v1h-2zM1160 0h1v1h-1zM1163 0h3v1h-3zM1168 0h1v1h-1zM1174 0h1v1h-1zM1178 0h1v1h-1zM1182 0h3v1h-3zM1186 0h1v1h-1zM1189 0h2v1h-2zM1194 0h3v1h-3zM1204 0h3v1h-3zM1211 0h1v1h-1zM1217 0h1v1h-1zM1219 0h1v1h-1zM1223 0h3v1h-3zM1229 0h2v1h-2zM1235 0h2v1h-2zM1243 0h2v1h-2zM1249 0h3v1h-3zM1255 0h1v1h-1zM1259 0h2v1h-2zM1262 0h1v1h-1zM1264 0h3v1h-3zM1268 0h2v1h-2zM1271 0h1v1h-1zM1275 0h3v1h-3zM1289 0h2v1h-2zM1295 0h3v1h-3zM1307 0h2v1h-2zM1311 0h2v1h-2zM1316 0h1v1h-1zM1318 0h3v1h-3zM1324 0h3v1h-3zM1331 0h1v1h-1zM1336 0h2v1h-2zM1344 0h2v1h-2zM1348 0h2v1h-2zM1352 0h2v1h-2zM1355 0h3v1h-3zM1363 0h2v1h-2zM1366 0h1v1h-1zM1370 0h2v1h-2zM1374 0h2v1h-2zM1377 0h3v1h-3zM1381 0h2v1h-2zM1389 0h3v1h-3zM1396 0h2v1h-2zM1403 0h3v1h-3zM1417 0h2v1h-2zM1424 0h1v1h-1zM1427 0h1v1h-1zM1429 0h2v1h-2zM1437 0h2v1h-2zM1 1048h2v1h-2zM8 1048h2v1h-2zM13 1048h3v1h-3zM26 1048h2v1h-2zM34 1048h1v1h-1zM36 1048h2v1h-2zM45 1048h3v1h-3zM60 1048h3v1h-3zM68 1048h1v1h-1zM72 1048h2v1h-2zM77 1048h1v1h-1zM79 1048h2v1h-2zM89 1048h3v1h-3zM105 1048h2v1h-2zM108 1048h3v1h-3zM120 1048h2v1h-2zM126 1048h3v1h-3zM136 1048h2v1h-2zM145 1048h3v1h-3zM155 1048h1v1h-1zM176 1048h3v1h-3zM183 1048h3v1h-3zM194 1048h2v1h-2zM198 1048h1v1h-1zM200 1048h1v1h-1zM202 1048h3v1h-3zM208 1048h1v1h-1zM217 1048h3v1h-3zM224 1048h2v1h-2zM227 1048h2v1h-2zM239 1048h3v1h-3zM246 1048h3v1h-3zM253 1048h2v1h-2zM261 1048h2v1h-2zM268 1048h2v1h-2zM274 1048h1v1h-1zM276 1048h3v1h-3zM284 1048h2v1h-2zM290 1048h2v1h-2zM295 1048h3v1h-3zM299 1048h1v1h-1zM315 1048h2v1h-2zM325 1048h3v1h-3zM330 1048h1v1h-1zM349 1048h2v1h-2zM359 1048h1v1h-1zM361 1048h3v1h-3zM369 1048h1v1h-1zM371 1048h3v1h-3zM382 1048h1v1h-1zM393 1048h2v1h-2zM400 1048h1v1h-1zM411 1048h3v1h-3zM416 1048h1v1h-1zM420 1048h2v1h-2zM431 1048h2v1h-2zM435 1048h3v1h-3zM444 1048h2v1h-2zM449 1048h3v1h-3zM455 1048h1v1h-1zM457 1048h1v1h-1zM466 1048h3v1h-3zM475 1048h3v1h-3zM486 1048h1v1h-1zM489 1048h2v1h-2zM492 1048h3v1h-3zM498 1048h1v1h-1zM501 1048h3v1h-3zM510 1048h1v1h-1zM526 1048h3v1h-3zM531 1048h3v1h-3zM544 1048h1v1h-1zM556 1048h2v1h-2zM560 1048h2v1h-2zM567 1048h3v1h-3zM574 1048h1v1h-1zM578 1048h2v1h-2zM585 1048h1v1h-1zM587 1048h1v1h-1zM589 1048h2v1h-2zM592 1048h3v1h-3zM609 1048h1v1h-1zM614 1048h1v1h-1zM616 1048h2v1h-2zM619 1048h1v1h-1zM621 1048h2v1h-2zM626 1048h1v1h-1zM629 1048h3v1h-3zM638 1048h1v1h-1zM643 1048h3v1h-3zM647 1048h2v1h-2zM653 1048h3v1h-3zM660 1048h2v1h-2zM676 1048h3v1h-3zM680 1048h3v1h-3zM691 1048h3v1h-3zM697 1048h3v1h-3zM717 1048h3v1h-3zM724 1048h3v1h-3zM738 1048h3v1h-3zM744 1048h2v1h-2zM748 1048h3v1h-3zM757 1048h2v1h-2zM774 1048h3v1h-3zM781 1048h3v1h-3zM785 1048h2v1h-2zM793 1048h1v1h-1zM795 1048h2v1h-2zM798 1048h1v1h-1zM808 1048h1v1h-1zM814 1048h2v1h-2zM818 1048h2v1h-2zM827 1048h3v1h-3zM837 1048h2v1h-2zM845 1048h3v1h-3zM854 1048h1v1h-1zM863 1048h3v1h-3zM871 1048h1v1h-1zM874 1048h2v1h-2zM877 1048h1v1h-1zM880 1048h3v1h-3zM890 1048h2v1h-2zM895 1048h2v1h-2zM903 1048h2v1h-2zM911 1048h2v1h-2zM919 1048h1v1h-1zM931 1048h2v1h-2zM934 1048h1v1h-1zM949 1048h2v1h-2zM953 1048h1v1h-1zM956 1048h3v1h-3zM961 1048h3v1h-3zM973 1048h3v1h-3zM978 1048h1v1h-1zM981 1048h1v1h-1zM988 1048h1v1h-1zM991 1048h1v1h-1zM999 1048h2v1h-2zM1004 1048h3v1h-3zM1010 1048h2v1h-2zM1013 1048h2v1h-2zM1018 1048h2v1h-2zM1021 1048h1v1h-1zM1025 1048h2v1h-2zM1028 1048h1v1h-1zM1038 1048h2v1h-2zM1053 1048h1v1h-1zM1058 1048h2v1h-2zM1065 1048h2v1h-2zM1072 1048h1v1h-1zM1076 1048h3v1h-3zM1085 1048h3v1h-3zM1090 1048h1v1h-1zM1093 1048h1v1h-1zM1098 1048h1v1h-1zM1100 1048h1v1h-1zM1102 1048h2v1h-2zM1110 1048h2v1h-2zM1117 1048h1v1h-1zM1122 1048h1v1h-1zM1131 1048h2v1h-2zM1137 1048h3v1h-3zM1142 1048h3v1h-3zM1152 1048h2v1h-2zM1156 1048h3v1h-3zM1161 1048h2v1h-2zM1168 1048h2v1h-2zM1172 1048h1v1h-1zM1174 1048h3v1h-3zM1179 1048h2v1h-2zM1187 1048h1v1h-1zM1200 1048h3v1h-3zM1213 1048h2v1h-2zM1227 1048h2v1h-2zM1239 1048h3v1h-3zM1249 1048h3v1h-3zM1266 1048h3v1h-3zM1275 1048h2v1h-2zM1289 1048h1v1h-1zM1302 1048h3v1h-3zM1306 1048h1v1h-1zM1308 1048h1v1h-1zM1314 1048h3v1h-3zM1321 1048h2v1h-2zM1325 1048h3v1h-3zM1337 1048h3v1h-3zM1344 1048h3v1h-3zM1348 1048h2v1h-2zM1356 1048h2v1h-2zM1360 1048h2v1h-2zM1363 1048h3v1h-3zM1370 1048h3v1h-3zM1389 1048h3v1h-3zM1394 1048h3v1h-3zM1399 1048h3v1h-3zM1404 1048h2v1h-2zM1408 1048h2v1h-2zM1428 1048h3v1h-3zM1437 1048h2v1h-2zM0 7v3h1v-3zM0 12v1h1v-1zM0 20v1h1v-1zM0 23v2h1v-2zM0 28v2h1v-2zM0 40v3h1v-3zM0 50v3h1v-3zM0 55v3h1v-3zM0 63v1h1v-1zM0 75v1h1v-1zM0 77v1h1v-1zM0 87v1h1v-1zM0 90v1h1v-1zM0 95v2h1v-2zM0 101v3h1v-3zM0 106v3h1v-3zM0 111v1h1v-1zM0 118v2h1v-2zM0 121v2h1v-2zM0 125v2h1v-2zM0 130v3h1v-3zM0 136v1h1v-1zM0 144v1h1v-1zM0 146v3h1v-3zM0 161v2h1v-2zM0 164v3h1v-3zM0 173v2h1v-2zM0 178v1h1v-1zM0 180v1h1v-1zM0 184v3h1v-3zM0 190v2h1v-2zM0 195v3h1v-3zM0 201v2h1v-2zM0 206v1h1v-1zM0 210v3h1v-3zM0 215v2h1v-2zM0 229v3h1v-3zM0 236v2h1v-2zM0 240v2h1v-2zM0 243v1h1v-1zM0 245v1h1v-1zM0 248v2h1v-2zM0 306v2h1v-2zM0 321v1h1v-1zM0 334v2h1v-2zM0 337v3h1v-3zM0 349v2h1v-2zM0 356v2h1v-2zM0 362v2h1v-2zM0 369v3h1v-3zM0 375v3h1v-3zM0 385v2h1v-2zM0 390v2h1v-2zM0 393v1h1v-1zM0 398v1h1v-1zM0 400v2h1v-2zM0 408v3h1v-3zM0 417v2h1v-2zM0 426v1h1v-1zM0 436v1h1v-1zM0 439v2h1v-2zM0 459v3h1v-3zM0 464v3h1v-3zM0 470v3h1v-3zM0 491v1h1v-1zM0 496v3h1v-3zM0 507v3h1v-3zM0 518v2h1v-2zM0 537v3h1v-3zM0 545v1h1v-1zM0 550v1h1v-1zM0 560v2h1v-2zM0 565v3h1v-3zM0 569v1h1v-1zM0 575v1h1v-1zM0 585v3h1v-3zM0 592v3h1v-3zM0 605v2h1v-2zM0 615v3h1v-3zM0 622v2h1v-2zM0 629v1h1v-1zM0 638v2h1v-2zM0 642v2h1v-2zM0 649v2h1v-2zM0 657v1h1v-1zM0 668v2h1v-2zM0 677v3h1v-3zM0 688v1h1v-1zM0 693v2h1v-2zM0 705v3h1v-3zM0 709v2h1v-2zM0 712v3h1v-3zM0 718v3h1v-3zM0 723v1h1v-1zM0 730v2h1v-2zM0 739v3h1v-3zM0 743v3h1v-3zM0 748v1h1v-1zM0 751v2h1v-2zM0 758v3h1v-3zM0 772v1h1v-1zM0 779v2h1v-2zM0 784v2h1v-2zM0 791v2h1v-2zM0 797v2h1v-2zM0 802v2h1v-2zM0 808v1h1v-1zM0 816v3h1v-3zM0 830v2h1v-2zM0 845v1h1v-1zM0 850v2h1v-2zM0 855v3h1v-3zM0 860v2h1v-2zM0 867v2h1v-2zM0 875v1h1v-1zM0 883v1h1v-1zM0 885v1h1v-1zM0 891v2h1v-2zM0 899v3h1v-3zM0 907v1h1v-1zM0 909v1h1v-1zM0 918v2h1v-2zM0 925v3h1v-3zM0 931v3h1v-3zM0 949v3h1v-3zM0 956v3h1v-3zM0 966v3h1v-3zM0 988v3h1v-3zM0 1012v3h1v-3zM0 1020v3h1v-3zM0 1031v2h1v-2zM0 1039v1h1v-1zM0 1047v2h1v-2zM1438 5v2h1v-2zM1438 19v2h1v-2zM1438 26v3h1v-3zM1438 36v1h1v-1zM1438 47v1h1v-1zM1438 51v3h1v-3zM1438 59v1h1v-1zM1438 65v3h1v-3zM1438 78v2h1v-2zM1438 81v2h1v-2zM1438 90v2h1v-2zM1438 93v3h1v-3zM1438 98v1h1v-1zM1438 117v1h1v-1zM1438 121v2h1v-2zM1438 132v2h1v-2zM1438 139v1h1v-1zM1438 143v2h1v-2zM1438 148v2h1v-2zM1438 152v3h1v-3zM1438 158v3h1v-3zM1438 172v3h1v-3zM1438 176v3h1v-3zM1438 181v3h1v-3zM1438 188v3h1v-3zM1438 219v2h1v-2zM1438 222v1h1v-1zM1438 228v1h1v-1zM1438 235v2h1v-2zM1438 245v1h1v-1zM1438 250v3h1v-3zM1438 257v2h1v-2zM1438 265v3h1v-3zM1438 271v1h1v-1zM1438 273v3h1v-3zM1438 285v1h1v-1zM1438 289v2h1v-2zM1438 296v1h1v-1zM1438 317v1h1v-1zM1438 324v2h1v-2zM1438 332v1h1v-1zM1438 345v1h1v-1zM1438 347v3h1v-3zM1438 351v1h1v-1zM1438 354v3h1v-3zM1438 367v2h1v-2zM1438 375v2h1v-2zM1438 390v1h1v-1zM1438 404v2h1v-2zM1438 409v2h1v-2zM1438 414v1h1v-1zM1438 416v2h1v-2zM1438 423v3h1v-3zM1438 429v1h1v-1zM1438 436v1h1v-1zM1438 443v2h1v-2zM1438 458v3h1v-3zM1438 463v2h1v-2zM1438 466v3h1v-3zM1438 478v1h1v-1zM1438 485v3h1v-3zM1438 489v3h1v-3zM1438 493v3h1v-3zM1438 499v2h1v-2zM1438 539v2h1v-2zM1438 546v1h1v-1zM1438 556v2h1v-2zM1438 565v1h1v-1zM1438 571v3h1v-3zM1438 582v1h1v-1zM1438 586v3h1v-3zM1438 609v1h1v-1zM1438 617v2h1v-2zM1438 620v1h1v-1zM1438 628v2h1v-2zM1438 639v3h1v-3zM1438 645v3h1v-3zM1438 651v1h1v-1zM1438 653v3h1v-3zM1438 661v2h1v-2zM1438 665v2h1v-2zM1438 669v3h1v-3zM1438 674v1h1v-1zM1438 680v2h1v-2zM1438 686v2h1v-2zM1438 689v3h1v-3zM1438 694v1h1v-1zM1438 701v1h1v-1zM1438 707v3h1v-3zM1438 711v3h1v-3zM1438 715v3h1v-3zM1438 719v3h1v-3zM1438 725v2h1v-2zM1438 729v1h1v-1zM1438 735v2h1v-2zM1438 739v2h1v-2zM1438 747v1h1v-1zM1438 751v1h1v-1zM1438 753v1h1v-1zM1438 758v2h1v-2zM1438 764v3h1v-3zM1438 771v1h1v-1zM1438 775v1h1v-1zM1438 782v1h1v-1zM1438 784v2h1v-2zM1438 798v3h1v-3zM1438 807v1h1v-1zM1438 821v3h1v-3zM1438 826v3h1v-3zM1438 836v2h1v-2zM1438 840v1h1v-1zM1438 850v2h1v-2zM1438 857v2h1v-2zM1438 861v1h1v-1zM1438 867v1h1v-1zM1438 871v3h1v-3zM1438 876v2h1v-2zM1438 880v1h1v-1zM1438 882v1h1v-1zM1438 885v1h1v-1zM1438 900v3h1v-3zM1438 917v1h1v-1zM1438 919v3h1v-3zM1438 926v3h1v-3zM1438 934v3h1v-3zM1438 946v2h1v-2zM1438 953v3h1v-3zM1438 958v2h1v-2zM1438 961v2h1v-2zM1438 964v3h1v-3zM1438 973v2h1v-2zM1438 976v2h1v-2zM1438 980v3h1v-3zM1438 986v3h1v-3zM1438 995v2h1v-2zM1438 998v1h1v-1zM1438 1013v3h1v-3zM1438 1021v2h1v-2zM1438 1024v1h1v-1zM1438 1037v2h1v-2zM1438 1042v2h1v-2z"/><path fill="#9a9a9a" d="M6 1h1v1h-1zM12 1h2v1h-2zM21 1h1v1h-1zM26 1h1v1h-1zM28 1h1v1h-1zM39 1h2v1h-2zM43 1h2v1h-2zM51 1h1v1h-1zM59 1h2v1h-2zM68 1h1v1h-1zM87 1h1v1h-1zM95 1h1v1h-1zM98 1h1v1h-1zM104 1h1v1h-1zM110 1h2v1h-2zM123 1h1v1h-1zM128 1h1v1h-1zM137 1h2v1h-2zM147 1h1v1h-1zM154 1h2v1h-2zM158 1h1v1h-1zM162 1h2v1h-2zM178 1h1v1h-1zM183 1h2v1h-2zM190 1h1v1h-1zM204 1h2v1h-2zM242 1h1v1h-1zM247 1h2v1h-2zM274 1h2v1h-2zM283 1h2v1h-2zM291 1h2v1h-2zM295 1h2v1h-2zM303 1h2v1h-2zM321 1h2v1h-2zM325 1h1v1h-1zM364 1h2v1h-2zM372 1h2v1h-2zM378 1h2v1h-2zM385 1h1v1h-1zM388 1h2v1h-2zM392 1h1v1h-1zM404 1h2v1h-2zM418 1h2v1h-2zM439 1h1v1h-1zM448 1h2v1h-2zM478 1h2v1h-2zM482 1h2v1h-2zM485 1h1v1h-1zM503 1h1v1h-1zM507 1h1v1h-1zM520 1h1v1h-1zM527 1h2v1h-2zM536 1h2v1h-2zM541 1h1v1h-1zM543 1h1v1h-1zM566 1h1v1h-1zM568 1h1v1h-1zM585 1h1v1h-1zM595 1h2v1h-2zM600 1h1v1h-1zM612 1h2v1h-2zM638 1h2v1h-2zM647 1h2v1h-2zM667 1h2v1h-2zM671 1h2v1h-2zM679 1h1v1h-1zM688 1h2v1h-2zM695 1h1v1h-1zM699 1h1v1h-1zM706 1h2v1h-2zM711 1h2v1h-2zM724 1h2v1h-2zM728 1h1v1h-1zM731 1h2v1h-2zM734 1h1v1h-1zM737 1h1v1h-1zM743 1h2v1h-2zM759 1h2v1h-2zM765 1h2v1h-2zM777 1h2v1h-2zM793 1h1v1h-1zM800 1h1v1h-1zM822 1h2v1h-2zM832 1h1v1h-1zM843 1h2v1h-2zM853 1h2v1h-2zM866 1h2v1h-2zM870 1h2v1h-2zM880 1h1v1h-1zM887 1h1v1h-1zM891 1h2v1h-2zM896 1h1v1h-1zM905 1h1v1h-1zM907 1h1v1h-1zM912 1h1v1h-1zM940 1h1v1h-1zM949 1h2v1h-2zM959 1h1v1h-1zM961 1h2v1h-2zM968 1h1v1h-1zM991 1h2v1h-2zM1010 1h2v1h-2zM1020 1h1v1h-1zM1023 1h2v1h-2zM1027 1h2v1h-2zM1044 1h2v1h-2zM1052 1h2v1h-2zM1082 1h2v1h-2zM1092 1h1v1h-1zM1105 1h2v1h-2zM1109 1h1v1h-1zM1112 1h2v1h-2zM1127 1h2v1h-2zM1134 1h2v1h-2zM1153 1h2v1h-2zM1156 1h1v1h-1zM1160 1h2v1h-2zM1164 1h1v1h-1zM1179 1h1v1h-1zM1181 1h2v1h-2zM1187 1h1v1h-1zM1194 1h1v1h-1zM1198 1h1v1h-1zM1202 1h2v1h-2zM1210 1h1v1h-1zM1235 1h2v1h-2zM1249 1h1v1h-1zM1281 1h2v1h-2zM1286 1h1v1h-1zM1290 1h1v1h-1zM1296 1h2v1h-2zM1303 1h2v1h-2zM1316 1h2v1h-2zM1320 1h2v1h-2zM1328 1h1v1h-1zM1331 1h1v1h-1zM1349 1h2v1h-2zM1358 1h2v1h-2zM1364 1h2v1h-2zM1398 1h2v1h-2zM1406 1h2v1h-2zM1417 1h2v1h-2zM1427 1h2v1h-2zM1430 1h2v1h-2zM1434 1h2v1h-2zM1438 1h1v1h-1zM12 1047h2v1h-2zM89 1047h1v1h-1zM96 1047h2v1h-2zM111 1047h1v1h-1zM113 1047h2v1h-2zM160 1047h2v1h-2zM172 1047h2v1h-2zM206 1047h1v1h-1zM209 1047h1v1h-1zM217 1047h1v1h-1zM232 1047h2v1h-2zM249 1047h1v1h-1zM253 1047h1v1h-1zM257 1047h2v1h-2zM260 1047h1v1h-1zM265 1047h2v1h-2zM270 1047h1v1h-1zM284 1047h1v1h-1zM291 1047h2v1h-2zM323 1047h1v1h-1zM336 1047h1v1h-1zM361 1047h1v1h-1zM366 1047h1v1h-1zM391 1047h2v1h-2zM452 1047h2v1h-2zM462 1047h1v1h-1zM478 1047h1v1h-1zM486 1047h1v1h-1zM491 1047h2v1h-2zM509 1047h1v1h-1zM517 1047h2v1h-2zM540 1047h1v1h-1zM544 1047h1v1h-1zM553 1047h2v1h-2zM559 1047h2v1h-2zM565 1047h2v1h-2zM574 1047h1v1h-1zM576 1047h2v1h-2zM597 1047h2v1h-2zM664 1047h2v1h-2zM726 1047h1v1h-1zM731 1047h1v1h-1zM741 1047h1v1h-1zM752 1047h1v1h-1zM757 1047h2v1h-2zM772 1047h2v1h-2zM797 1047h1v1h-1zM819 1047h2v1h-2zM823 1047h1v1h-1zM857 1047h1v1h-1zM861 1047h1v1h-1zM871 1047h1v1h-1zM905 1047h2v1h-2zM917 1047h1v1h-1zM921 1047h2v1h-2zM966 1047h2v1h-2zM980 1047h2v1h-2zM1015 1047h2v1h-2zM1018 1047h1v1h-1zM1057 1047h1v1h-1zM1073 1047h2v1h-2zM1095 1047h1v1h-1zM1142 1047h2v1h-2zM1169 1047h2v1h-2zM1176 1047h2v1h-2zM1196 1047h1v1h-1zM1214 1047h2v1h-2zM1224 1047h1v1h-1zM1227 1047h2v1h-2zM1252 1047h1v1h-1zM1257 1047h2v1h-2zM1272 1047h1v1h-1zM1291 1047h2v1h-2zM1347 1047h1v1h-1zM1355 1047h1v1h-1zM1359 1047h2v1h-2zM1 7v2h1v-2zM1 60v2h1v-2zM1 75v1h1v-1zM1 81v1h1v-1zM1 104v2h1v-2zM1 110v2h1v-2zM1 131v2h1v-2zM1 141v2h1v-2zM1 145v2h1v-2zM1 180v1h1v-1zM1 187v1h1v-1zM1 223v1h1v-1zM1 227v2h1v-2zM1 250v2h1v-2zM1 284v2h1v-2zM1 309v1h1v-1zM1 317v2h1v-2zM1 351v2h1v-2zM1 366v1h1v-1zM1 407v2h1v-2zM1 424v1h1v-1zM1 454v2h1v-2zM1 478v2h1v-2zM1 503v2h1v-2zM1 517v1h1v-1zM1 529v2h1v-2zM1 532v2h1v-2zM1 552v2h1v-2zM1 573v2h1v-2zM1 593v1h1v-1zM1 595v2h1v-2zM1 602v2h1v-2zM1 611v2h1v-2zM1 617v2h1v-2zM1 650v1h1v-1zM1 652v2h1v-2zM1 698v1h1v-1zM1 705v1h1v-1zM1 764v1h1v-1zM1 792v2h1v-2zM1 831v2h1v-2zM1 876v2h1v-2zM1 885v1h1v-1zM1 887v2h1v-2zM1 891v1h1v-1zM1 964v2h1v-2zM1 981v1h1v-1zM1 994v1h1v-1zM1 1009v2h1v-2zM1 1014v2h1v-2zM1 1022v1h1v-1zM1437 13v1h1v-1zM1437 20v1h1v-1zM1437 69v1h1v-1zM1437 136v1h1v-1zM1437 163v1h1v-1zM1437 179v1h1v-1zM1437 188v1h1v-1zM1437 193v1h1v-1zM1437 225v2h1v-2zM1437 255v1h1v-1zM1437 261v1h1v-1zM1437 268v2h1v-2zM1437 308v2h1v-2zM1437 320v2h1v-2zM1437 332v1h1v-1zM1437 346v2h1v-2zM1437 352v2h1v-2zM1437 363v2h1v-2zM1437 394v1h1v-1zM1437 411v2h1v-2zM1437 432v1h1v-1zM1437 447v2h1v-2zM1437 473v2h1v-2zM1437 493v1h1v-1zM1437 495v2h1v-2zM1437 509v1h1v-1zM1437 521v1h1v-1zM1437 567v1h1v-1zM1437 579v2h1v-2zM1437 640v1h1v-1zM1437 673v1h1v-1zM1437 683v2h1v-2zM1437 686v1h1v-1zM1437 710v1h1v-1zM1437 714v1h1v-1zM1437 727v1h1v-1zM1437 745v2h1v-2zM1437 748v2h1v-2zM1437 752v2h1v-2zM1437 767v2h1v-2zM1437 785v1h1v-1zM1437 809v2h1v-2zM1437 834v2h1v-2zM1437 848v2h1v-2zM1437 858v2h1v-2zM1437 884v1h1v-1zM1437 899v1h1v-1zM1437 935v2h1v-2zM1437 954v1h1v-1zM1437 970v1h1v-1zM1437 974v2h1v-2zM1437 1032v1h1v-1zM1437 1046v2h1v-2z"/><path fill="#2a2a2a" d="M3 2h1v1h-1zM43 2h2v1h-2zM67 2h1v1h-1zM100 2h2v1h-2zM108 2h1v1h-1zM122 2h2v1h-2zM149 2h2v1h-2zM153 2h1v1h-1zM179 2h1v1h-1zM193 2h2v1h-2zM203 2h2v1h-2zM208 2h1v1h-1zM237 2h2v1h-2zM241 2h1v1h-1zM245 2h2v1h-2zM249 2h2v1h-2zM276 2h2v1h-2zM316 2h1v1h-1zM350 2h2v1h-2zM355 2h1v1h-1zM364 2h1v1h-1zM371 2h2v1h-2zM379 2h1v1h-1zM388 2h1v1h-1zM415 2h2v1h-2zM471 2h1v1h-1zM497 2h1v1h-1zM512 2h1v1h-1zM523 2h2v1h-2zM545 2h2v1h-2zM551 2h1v1h-1zM596 2h2v1h-2zM603 2h2v1h-2zM632 2h1v1h-1zM634 2h2v1h-2zM651 2h1v1h-1zM677 2h2v1h-2zM699 2h1v1h-1zM731 2h1v1h-1zM744 2h2v1h-2zM783 2h2v1h-2zM792 2h1v1h-1zM814 2h2v1h-2zM851 2h2v1h-2zM855 2h1v1h-1zM901 2h1v1h-1zM903 2h2v1h-2zM911 2h2v1h-2zM916 2h1v1h-1zM950 2h1v1h-1zM1004 2h1v1h-1zM1010 2h2v1h-2zM1019 2h1v1h-1zM1021 2h2v1h-2zM1026 2h1v1h-1zM1064 2h1v1h-1zM1073 2h1v1h-1zM1107 2h1v1h-1zM1125 2h2v1h-2zM1150 2h2v1h-2zM1180 2h2v1h-2zM1199 2h1v1h-1zM1214 2h2v1h-2zM1236 2h1v1h-1zM1282 2h1v1h-1zM1289 2h2v1h-2zM1337 2h2v1h-2zM1354 2h1v1h-1zM1381 2h1v1h-1zM2 3h2v1h-2zM13 3h1v1h-1zM25 3h2v1h-2zM51 3h1v1h-1zM56 3h2v1h-2zM81 3h2v1h-2zM100 3h2v1h-2zM124 3h2v1h-2zM144 3h2v1h-2zM152 3h2v1h-2zM162 3h2v1h-2zM177 3h2v1h-2zM196 3h2v1h-2zM232 3h2v1h-2zM235 3h2v1h-2zM238 3h1v1h-1zM241 3h1v1h-1zM256 3h1v1h-1zM260 3h1v1h-1zM269 3h1v1h-1zM273 3h1v1h-1zM286 3h1v1h-1zM339 3h1v1h-1zM348 3h2v1h-2zM358 3h2v1h-2zM395 3h2v1h-2zM400 3h2v1h-2zM490 3h2v1h-2zM498 3h2v1h-2zM544 3h2v1h-2zM603 3h1v1h-1zM623 3h1v1h-1zM704 3h1v1h-1zM710 3h2v1h-2zM742 3h2v1h-2zM748 3h1v1h-1zM756 3h2v1h-2zM775 3h2v1h-2zM784 3h2v1h-2zM844 3h1v1h-1zM849 3h2v1h-2zM873 3h1v1h-1zM907 3h2v1h-2zM936 3h1v1h-1zM943 3h1v1h-1zM961 3h2v1h-2zM977 3h1v1h-1zM982 3h1v1h-1zM1003 3h1v1h-1zM1018 3h2v1h-2zM1027 3h2v1h-2zM1054 3h2v1h-2zM1060 3h1v1h-1zM1067 3h1v1h-1zM1078 3h1v1h-1zM1082 3h2v1h-2zM1149 3h2v1h-2zM1157 3h2v1h-2zM1238 3h2v1h-2zM1283 3h2v1h-2zM1317 3h2v1h-2zM1320 3h2v1h-2zM1353 3h2v1h-2zM1369 3h1v1h-1zM1436 3h2v1h-2zM23 4h2v1h-2zM28 4h1v1h-1zM31 4h2v1h-2zM54 4h1v1h-1zM61 4h1v1h-1zM73 4h1v1h-1zM118 4h2v1h-2zM128 4h2v1h-2zM165 4h1v1h-1zM175 4h2v1h-2zM184 4h2v1h-2zM193 4h2v1h-2zM221 4h1v1h-1zM243 4h1v1h-1zM269 4h1v1h-1zM277 4h1v1h-1zM304 4h1v1h-1zM323 4h1v1h-1zM344 4h2v1h-2zM391 4h2v1h-2zM428 4h1v1h-1zM430 4h2v1h-2zM439 4h2v1h-2zM455 4h1v1h-1zM458 4h1v1h-1zM468 4h1v1h-1zM475 4h1v1h-1zM477 4h2v1h-2zM481 4h2v1h-2zM491 4h1v1h-1zM496 4h1v1h-1zM522 4h2v1h-2zM580 4h1v1h-1zM584 4h2v1h-2zM614 4h1v1h-1zM628 4h1v1h-1zM632 4h1v1h-1zM665 4h1v1h-1zM669 4h1v1h-1zM730 4h1v1h-1zM759 4h1v1h-1zM798 4h1v1h-1zM877 4h2v1h-2zM885 4h2v1h-2zM898 4h1v1h-1zM919 4h1v1h-1zM934 4h2v1h-2zM939 4h2v1h-2zM969 4h1v1h-1zM1003 4h1v1h-1zM1018 4h1v1h-1zM1022 4h2v1h-2zM1026 4h2v1h-2zM1033 4h2v1h-2zM1066 4h1v1h-1zM1086 4h2v1h-2zM1131 4h2v1h-2zM1168 4h1v1h-1zM1172 4h2v1h-2zM1184 4h1v1h-1zM1203 4h2v1h-2zM1214 4h2v1h-2zM1229 4h2v1h-2zM1241 4h1v1h-1zM1248 4h1v1h-1zM1252 4h1v1h-1zM1283 4h1v1h-1zM1291 4h1v1h-1zM1293 4h1v1h-1zM1306 4h2v1h-2zM1372 4h1v1h-1zM1408 4h2v1h-2zM1413 4h2v1h-2zM1423 4h2v1h-2zM22 1044h2v1h-2zM53 1044h1v1h-1zM146 1044h1v1h-1zM191 1044h1v1h-1zM199 1044h2v1h-2zM202 1044h2v1h-2zM220 1044h2v1h-2zM248 1044h1v1h-1zM297 1044h2v1h-2zM338 1044h1v1h-1zM381 1044h1v1h-1zM389 1044h2v1h-2zM392 1044h2v1h-2zM415 1044h2v1h-2zM433 1044h2v1h-2zM443 1044h1v1h-1zM446 1044h1v1h-1zM474 1044h1v1h-1zM480 1044h2v1h-2zM554 1044h1v1h-1zM577 1044h2v1h-2zM586 1044h1v1h-1zM588 1044h1v1h-1zM593 1044h2v1h-2zM663 1044h2v1h-2zM683 1044h2v1h-2zM687 1044h1v1h-1zM689 1044h1v1h-1zM743 1044h1v1h-1zM745 1044h1v1h-1zM762 1044h1v1h-1zM768 1044h2v1h-2zM804 1044h2v1h-2zM808 1044h2v1h-2zM834 1044h1v1h-1zM850 1044h2v1h-2zM875 1044h1v1h-1zM885 1044h2v1h-2zM895 1044h1v1h-1zM914 1044h2v1h-2zM929 1044h2v1h-2zM971 1044h2v1h-2zM974 1044h1v1h-1zM983 1044h2v1h-2zM1014 1044h2v1h-2zM1038 1044h1v1h-1zM1060 1044h1v1h-1zM1083 1044h2v1h-2zM1100 1044h2v1h-2zM1105 1044h2v1h-2zM1156 1044h1v1h-1zM1158 1044h2v1h-2zM1191 1044h1v1h-1zM1239 1044h1v1h-1zM1272 1044h1v1h-1zM1295 1044h2v1h-2zM1299 1044h2v1h-2zM1353 1044h2v1h-2zM1390 1044h2v1h-2zM1419 1044h2v1h-2zM1428 1044h2v1h-2zM1433 1044h1v1h-1zM15 1045h2v1h-2zM42 1045h1v1h-1zM45 1045h2v1h-2zM57 1045h2v1h-2zM80 1045h1v1h-1zM137 1045h2v1h-2zM140 1045h1v1h-1zM192 1045h2v1h-2zM205 1045h1v1h-1zM223 1045h2v1h-2zM265 1045h2v1h-2zM322 1045h1v1h-1zM390 1045h2v1h-2zM402 1045h1v1h-1zM421 1045h2v1h-2zM447 1045h1v1h-1zM466 1045h2v1h-2zM479 1045h1v1h-1zM490 1045h2v1h-2zM557 1045h1v1h-1zM593 1045h2v1h-2zM627 1045h1v1h-1zM653 1045h2v1h-2zM658 1045h2v1h-2zM678 1045h1v1h-1zM681 1045h1v1h-1zM694 1045h2v1h-2zM712 1045h1v1h-1zM727 1045h1v1h-1zM751 1045h1v1h-1zM754 1045h2v1h-2zM827 1045h2v1h-2zM870 1045h1v1h-1zM887 1045h2v1h-2zM892 1045h2v1h-2zM930 1045h2v1h-2zM938 1045h2v1h-2zM979 1045h2v1h-2zM1011 1045h2v1h-2zM1032 1045h1v1h-1zM1048 1045h1v1h-1zM1079 1045h2v1h-2zM1114 1045h1v1h-1zM1118 1045h1v1h-1zM1122 1045h2v1h-2zM1130 1045h2v1h-2zM1151 1045h1v1h-1zM1182 1045h2v1h-2zM1186 1045h1v1h-1zM1214 1045h2v1h-2zM1260 1045h1v1h-1zM1264 1045h2v1h-2zM1294 1045h1v1h-1zM1301 1045h1v1h-1zM1331 1045h1v1h-1zM1354 1045h2v1h-2zM1394 1045h2v1h-2zM1415 1045h1v1h-1zM1425 1045h2v1h-2zM8 1046h2v1h-2zM12 1046h2v1h-2zM23 1046h2v1h-2zM29 1046h2v1h-2zM44 1046h2v1h-2zM49 1046h2v1h-2zM65 1046h2v1h-2zM89 1046h1v1h-1zM97 1046h2v1h-2zM129 1046h2v1h-2zM193 1046h1v1h-1zM197 1046h2v1h-2zM214 1046h2v1h-2zM272 1046h1v1h-1zM302 1046h1v1h-1zM304 1046h2v1h-2zM361 1046h1v1h-1zM365 1046h2v1h-2zM406 1046h1v1h-1zM460 1046h2v1h-2zM484 1046h1v1h-1zM486 1046h1v1h-1zM501 1046h2v1h-2zM509 1046h2v1h-2zM523 1046h2v1h-2zM551 1046h1v1h-1zM553 1046h2v1h-2zM568 1046h1v1h-1zM585 1046h1v1h-1zM676 1046h1v1h-1zM700 1046h2v1h-2zM706 1046h2v1h-2zM726 1046h2v1h-2zM730 1046h2v1h-2zM762 1046h1v1h-1zM768 1046h2v1h-2zM773 1046h1v1h-1zM818 1046h1v1h-1zM830 1046h1v1h-1zM836 1046h1v1h-1zM838 1046h2v1h-2zM881 1046h2v1h-2zM887 1046h2v1h-2zM924 1046h2v1h-2zM1013 1046h2v1h-2zM1020 1046h1v1h-1zM1022 1046h1v1h-1zM1042 1046h2v1h-2zM1050 1046h2v1h-2zM1108 1046h2v1h-2zM1123 1046h2v1h-2zM1126 1046h1v1h-1zM1154 1046h2v1h-2zM1173 1046h1v1h-1zM1184 1046h2v1h-2zM1204 1046h1v1h-1zM1224 1046h1v1h-1zM1251 1046h1v1h-1zM1253 1046h1v1h-1zM1263 1046h1v1h-1zM1273 1046h2v1h-2zM1317 1046h2v1h-2zM1336 1046h2v1h-2zM1359 1046h1v1h-1zM1382 1046h1v1h-1zM1394 1046h2v1h-2zM1397 1046h2v1h-2zM1401 1046h1v1h-1zM1429 1046h2v1h-2zM2 29v2h1v-2zM2 66v1h1v-1zM2 93v1h1v-1zM2 109v2h1v-2zM2 181v2h1v-2zM2 196v1h1v-1zM2 220v1h1v-1zM2 233v1h1v-1zM2 268v1h1v-1zM2 272v2h1v-2zM2 276v1h1v-1zM2 290v2h1v-2zM2 345v2h1v-2zM2 352v1h1v-1zM2 365v2h1v-2zM2 424v1h1v-1zM2 477v1h1v-1zM2 491v1h1v-1zM2 521v1h1v-1zM2 561v2h1v-2zM2 619v1h1v-1zM2 631v1h1v-1zM2 637v2h1v-2zM2 666v2h1v-2zM2 697v1h1v-1zM2 742v1h1v-1zM2 753v1h1v-1zM2 791v1h1v-1zM2 833v2h1v-2zM2 882v2h1v-2zM2 903v2h1v-2zM2 920v1h1v-1zM2 936v1h1v-1zM2 1003v2h1v-2zM2 1011v2h1v-2zM2 1034v1h1v-1zM2 1047v1h1v-1zM3 30v2h1v-2zM3 61v2h1v-2zM3 90v1h1v-1zM3 125v2h1v-2zM3 134v1h1v-1zM3 167v1h1v-1zM3 226v2h1v-2zM3 236v1h1v-1zM3 240v2h1v-2zM3 321v1h1v-1zM3 352v2h1v-2zM3 396v2h1v-2zM3 401v2h1v-2zM3 410v1h1v-1zM3 431v1h1v-1zM3 437v1h1v-1zM3 447v1h1v-1zM3 471v2h1v-2zM3 476v2h1v-2zM3 482v1h1v-1zM3 510v2h1v-2zM3 534v1h1v-1zM3 537v1h1v-1zM3 545v2h1v-2zM3 569v2h1v-2zM3 592v1h1v-1zM3 632v2h1v-2zM3 648v1h1v-1zM3 664v2h1v-2zM3 685v1h1v-1zM3 696v2h1v-2zM3 707v1h1v-1zM3 732v2h1v-2zM3 760v2h1v-2zM3 777v2h1v-2zM3 790v1h1v-1zM3 831v2h1v-2zM3 854v1h1v-1zM3 874v2h1v-2zM3 887v2h1v-2zM3 940v2h1v-2zM3 960v1h1v-1zM3 1023v1h1v-1zM3 1033v2h1v-2zM3 1040v1h1v-1zM4 24v2h1v-2zM4 47v1h1v-1zM4 62v2h1v-2zM4 108v2h1v-2zM4 111v1h1v-1zM4 116v1h1v-1zM4 121v2h1v-2zM4 130v1h1v-1zM4 141v2h1v-2zM4 177v1h1v-1zM4 184v2h1v-2zM4 188v1h1v-1zM4 232v1h1v-1zM4 239v2h1v-2zM4 293v2h1v-2zM4 346v1h1v-1zM4 359v1h1v-1zM4 389v2h1v-2zM4 419v2h1v-2zM4 463v1h1v-1zM4 488v2h1v-2zM4 512v1h1v-1zM4 520v1h1v-1zM4 523v2h1v-2zM4 551v1h1v-1zM4 558v1h1v-1zM4 561v2h1v-2zM4 566v2h1v-2zM4 578v1h1v-1zM4 608v2h1v-2zM4 624v1h1v-1zM4 673v1h1v-1zM4 697v1h1v-1zM4 722v2h1v-2zM4 738v1h1v-1zM4 744v1h1v-1zM4 769v2h1v-2zM4 781v1h1v-1zM4 825v2h1v-2zM4 835v1h1v-1zM4 851v1h1v-1zM4 856v2h1v-2zM4 860v1h1v-1zM4 879v2h1v-2zM4 883v1h1v-1zM4 895v2h1v-2zM4 909v1h1v-1zM4 958v2h1v-2zM4 982v2h1v-2zM4 1007v1h1v-1zM4 1012v1h1v-1zM1434 19v1h1v-1zM1434 22v2h1v-2zM1434 38v2h1v-2zM1434 42v2h1v-2zM1434 54v2h1v-2zM1434 66v1h1v-1zM1434 84v2h1v-2zM1434 100v1h1v-1zM1434 107v1h1v-1zM1434 115v2h1v-2zM1434 133v2h1v-2zM1434 162v2h1v-2zM1434 232v1h1v-1zM1434 239v2h1v-2zM1434 245v1h1v-1zM1434 265v2h1v-2zM1434 275v1h1v-1zM1434 286v2h1v-2zM1434 294v2h1v-2zM1434 298v2h1v-2zM1434 307v2h1v-2zM1434 327v2h1v-2zM1434 375v1h1v-1zM1434 406v2h1v-2zM1434 435v1h1v-1zM1434 461v2h1v-2zM1434 464v1h1v-1zM1434 473v2h1v-2zM1434 480v1h1v-1zM1434 482v2h1v-2zM1434 490v1h1v-1zM1434 527v1h1v-1zM1434 536v1h1v-1zM1434 541v1h1v-1zM1434 595v1h1v-1zM1434 623v1h1v-1zM1434 635v2h1v-2zM1434 652v2h1v-2zM1434 661v1h1v-1zM1434 670v2h1v-2zM1434 676v1h1v-1zM1434 682v2h1v-2zM1434 694v2h1v-2zM1434 720v2h1v-2zM1434 725v1h1v-1zM1434 798v2h1v-2zM1434 803v2h1v-2zM1434 811v2h1v-2zM1434 820v1h1v-1zM1434 841v1h1v-1zM1434 850v2h1v-2zM1434 880v2h1v-2zM1434 926v2h1v-2zM1434 940v1h1v-1zM1434 950v2h1v-2zM1434 996v2h1v-2zM1434 1009v1h1v-1zM1434 1020v2h1v-2zM1434 1029v2h1v-2zM1435 0v1h1v-1zM1435 2v1h1v-1zM1435 59v2h1v-2zM1435 88v2h1v-2zM1435 149v2h1v-2zM1435 176v2h1v-2zM1435 200v1h1v-1zM1435 215v2h1v-2zM1435 224v1h1v-1zM1435 232v2h1v-2zM1435 304v2h1v-2zM1435 321v1h1v-1zM1435 337v2h1v-2zM1435 408v1h1v-1zM1435 414v1h1v-1zM1435 426v2h1v-2zM1435 453v1h1v-1zM1435 477v1h1v-1zM1435 488v2h1v-2zM1435 510v2h1v-2zM1435 524v2h1v-2zM1435 533v1h1v-1zM1435 537v1h1v-1zM1435 558v2h1v-2zM1435 605v1h1v-1zM1435 625v2h1v-2zM1435 671v2h1v-2zM1435 738v2h1v-2zM1435 771v2h1v-2zM1435 779v2h1v-2zM1435 800v2h1v-2zM1435 813v2h1v-2zM1435 817v1h1v-1zM1435 823v1h1v-1zM1435 874v1h1v-1zM1435 877v1h1v-1zM1435 884v1h1v-1zM1435 908v1h1v-1zM1435 926v1h1v-1zM1435 935v1h1v-1zM1435 1013v1h1v-1zM1435 1020v2h1v-2zM1435 1039v1h1v-1zM1435 1043v2h1v-2zM1436 5v1h1v-1zM1436 9v2h1v-2zM1436 36v2h1v-2zM1436 65v2h1v-2zM1436 80v2h1v-2zM1436 110v2h1v-2zM1436 124v1h1v-1zM1436 127v1h1v-1zM1436 157v1h1v-1zM1436 163v1h1v-1zM1436 183v1h1v-1zM1436 203v1h1v-1zM1436 225v1h1v-1zM1436 235v1h1v-1zM1436 263v1h1v-1zM1436 299v1h1v-1zM1436 326v2h1v-2zM1436 343v2h1v-2zM1436 382v1h1v-1zM1436 403v2h1v-2zM1436 412v1h1v-1zM1436 421v1h1v-1zM1436 466v1h1v-1zM1436 515v2h1v-2zM1436 520v2h1v-2zM1436 534v1h1v-1zM1436 559v1h1v-1zM1436 569v1h1v-1zM1436 610v1h1v-1zM1436 622v1h1v-1zM1436 637v2h1v-2zM1436 675v1h1v-1zM1436 695v2h1v-2zM1436 719v2h1v-2zM1436 727v1h1v-1zM1436 750v2h1v-2zM1436 757v2h1v-2zM1436 793v1h1v-1zM1436 807v2h1v-2zM1436 818v1h1v-1zM1436 842v2h1v-2zM1436 851v1h1v-1zM1436 864v2h1v-2zM1436 893v2h1v-2zM1436 896v2h1v-2zM1436 901v1h1v-1zM1436 913v1h1v-1zM1436 916v2h1v-2zM1436 927v1h1v-1zM1436 943v2h1v-2zM1436 966v1h1v-1zM1436 973v1h1v-1zM1436 999v1h1v-1zM1436 1018v1h1v-1zM1436 1034v2h1v-2z"/></svg>
</body></html>
